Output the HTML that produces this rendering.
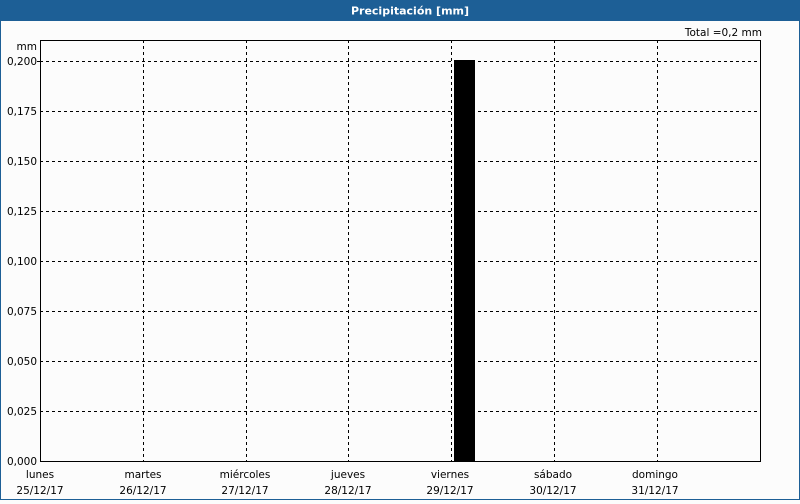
<!DOCTYPE html><html><head><style>body{margin:0;width:800px;height:500px;overflow:hidden;background:#fcfcfc;font-family:"DejaVu Sans","Liberation Sans",sans-serif}</style></head><body>
<svg width="800" height="500" xmlns="http://www.w3.org/2000/svg" font-family="DejaVu Sans, Liberation Sans, sans-serif" font-size="10.5">
<rect width="800" height="500" fill="#fcfcfc"/>
<rect x="0" y="0" width="800" height="21" fill="#1d5f96"/>
<rect x="0.5" y="0.5" width="799" height="499" fill="none" stroke="#1d5f96"/>
<text x="410" y="14.5" text-anchor="middle" fill="#fff" font-weight="bold" font-size="11">Precipitación [mm]</text>
<text x="762" y="36" text-anchor="end" fill="#000">Total =0,2 mm</text>
<text x="37" y="50" text-anchor="end">mm</text>
<g stroke="#000" stroke-dasharray="3,3" stroke-width="1">
<line x1="40" y1="61.5" x2="760" y2="61.5"/><line x1="40" y1="111.5" x2="760" y2="111.5"/><line x1="40" y1="161.5" x2="760" y2="161.5"/><line x1="40" y1="211.5" x2="760" y2="211.5"/><line x1="40" y1="261.5" x2="760" y2="261.5"/><line x1="40" y1="311.5" x2="760" y2="311.5"/><line x1="40" y1="361.5" x2="760" y2="361.5"/><line x1="40" y1="411.5" x2="760" y2="411.5"/>
<line x1="143.5" y1="40" x2="143.5" y2="461"/><line x1="246.5" y1="40" x2="246.5" y2="461"/><line x1="348.5" y1="40" x2="348.5" y2="461"/><line x1="451.5" y1="40" x2="451.5" y2="461"/><line x1="554.5" y1="40" x2="554.5" y2="461"/><line x1="657.5" y1="40" x2="657.5" y2="461"/>
</g>
<rect x="454" y="60" width="21" height="401" fill="#000"/>
<rect x="40.5" y="40.5" width="720" height="421" fill="none" stroke="#000"/>
<line x1="37" y1="61.5" x2="40" y2="61.5" stroke="#000"/>
<g text-anchor="end">
<text x="37" y="65">0,200</text><text x="37" y="115">0,175</text><text x="37" y="165">0,150</text><text x="37" y="215">0,125</text><text x="37" y="265">0,100</text><text x="37" y="315">0,075</text><text x="37" y="365">0,050</text><text x="37" y="415">0,025</text><text x="37" y="465">0,000</text>
</g>
<g text-anchor="middle">
<text x="40" y="478">lunes</text><text x="40" y="494">25/12/17</text>
<text x="143" y="478">martes</text><text x="143" y="494">26/12/17</text>
<text x="245" y="478">miércoles</text><text x="245" y="494">27/12/17</text>
<text x="348" y="478">jueves</text><text x="348" y="494">28/12/17</text>
<text x="450" y="478">viernes</text><text x="450" y="494">29/12/17</text>
<text x="553" y="478">sábado</text><text x="553" y="494">30/12/17</text>
<text x="655" y="478">domingo</text><text x="655" y="494">31/12/17</text>
</g>
</svg>
</body></html>
